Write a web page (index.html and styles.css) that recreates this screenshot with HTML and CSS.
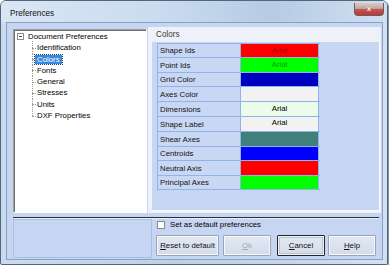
FILE: index.html
```html
<!DOCTYPE html>
<html>
<head>
<meta charset="utf-8">
<link rel="stylesheet" href="styles.css">
</head>
<body>
<div class="window">
  <div class="titlebar">
    <span class="title">Preferences</span>
    <div class="close"><span>x</span></div>
  </div>
  <div class="client">
    <div class="main">
      <div class="tree">
        <div class="root"><span class="minus"></span><span>Document Preferences</span></div>
        <ul class="children">
          <li>Identification</li>
          <li><span class="sel">Colors</span></li>
          <li>Fonts</li>
          <li>General</li>
          <li>Stresses</li>
          <li>Units</li>
          <li>DXF Properties</li>
        </ul>
      </div>
      <div class="page">
        <div class="page-title">Colors</div>
        <div class="panel">
          <div class="table">
            <div class="row h14"><div class="label">Shape Ids</div><div class="swatch red"><span class="t-red">Arial</span></div></div>
            <div class="row h15"><div class="label">Point Ids</div><div class="swatch green"><span class="t-green">Arial</span></div></div>
            <div class="row h14"><div class="label">Grid Color</div><div class="swatch navy"></div></div>
            <div class="row h15"><div class="label">Axes Color</div><div class="swatch light"></div></div>
            <div class="row h15"><div class="label">Dimensions</div><div class="swatch mint"><span>Arial</span></div></div>
            <div class="row h15"><div class="label">Shape Label</div><div class="swatch light top"><span>Arial</span></div></div>
            <div class="row h15"><div class="label">Shear Axes</div><div class="swatch teal"></div></div>
            <div class="row h14"><div class="label">Centroids</div><div class="swatch blue"></div></div>
            <div class="row h15"><div class="label">Neutral Axis</div><div class="swatch red"></div></div>
            <div class="row h14"><div class="label">Principal Axes</div><div class="swatch green"></div></div>
          </div>
        </div>
      </div>
    </div>
    <div class="separator"></div>
    <div class="bottom">
      <div class="left-box"></div>
      <div class="actions">
        <label class="check"><span class="box"></span><span>Set as default preferences</span></label>
        <div class="buttons">
          <button class="btn reset"><u>R</u>eset to default</button>
          <button class="btn disabled"><u>O</u>k</button>
          <button class="btn default"><u>C</u>ancel</button>
          <button class="btn help"><u>H</u>elp</button>
        </div>
      </div>
    </div>
  </div>
</div>
</body>
</html>
```

FILE: styles.css
```css
html, body {
  margin: 0;
  padding: 0;
  background: #ffffff;
}

body {
  font-family: "Liberation Sans", Arial, sans-serif;
  font-size: 7.8px;
  color: #000;
}

.window {
  box-sizing: border-box;
  width: 388px;
  height: 265px;
  border: 1px solid #56657a;
  border-radius: 6px 6px 2px 2px;
  background: linear-gradient(to right, #c9dbee 0%, #bcd1e9 45%, #c3d6ec 75%, #d2e1f1 100%);
  display: flex;
  flex-direction: column;
  box-shadow: 1px 1px 0 #7c8fa8;
}

.titlebar {
  height: 21px;
  display: flex;
  align-items: center;
  padding-left: 9px;
  background: linear-gradient(to right, #d9e6f4 0%, #cadcf0 40%, #b6cce4 70%, #cfdff0 100%);
  border-radius: 5px 5px 0 0;
}

.title {
  font-size: 8.2px;
  color: #111;
  margin-top: 4px;
}

.close {
  margin-left: auto;
  margin-right: 3px;
  align-self: flex-start;
  margin-top: 2px;
  width: 30px;
  height: 13px;
  box-sizing: border-box;
  border: 1px solid #6e5a58;
  border-top: none;
  border-radius: 0 0 4px 4px;
  background: linear-gradient(to bottom, #d9ccc6 0%, #bfa9a2 45%, #c8504e 55%, #b93a3a 100%);
  display: flex;
  align-items: center;
  justify-content: center;
}

.close span {
  color: #fff;
  font-weight: bold;
  font-size: 8px;
  line-height: 1;
  margin-top: -1px;
  text-shadow: 0 0 1px #6a3030;
}

.client {
  flex: 1;
  margin: 0 4px 4px 5px;
  border: 1px solid #8aa1c3;
  background: #c6d6f2;
  display: flex;
  flex-direction: column;
  padding: 0 1px 1px 0;
}

.main {
  display: flex;
  padding: 4px 0 0 6px;
}

.tree {
  box-sizing: border-box;
  margin-top: 2px;
  width: 134px;
  height: 184px;
  background: #fff;
  border: 1px solid;
  border-color: #a0a0a0 #ffffff #ffffff #a0a0a0;
  box-shadow: inset 1px 1px 0 #6e6e6e;
  padding-top: 1px;
  line-height: 11.3px;
}

.root {
  display: flex;
  align-items: center;
  height: 11.3px;
}

.minus {
  box-sizing: border-box;
  width: 7px;
  height: 7px;
  margin-left: 3px;
  margin-right: 4px;
  border: 1px solid #8f8f8f;
  background: linear-gradient(#555, #555) center / 3px 1px no-repeat, #fff;
}

.children {
  list-style: none;
  margin: 0 0 0 18px;
  padding: 0;
}

.children li {
  position: relative;
  padding-left: 5px;
  height: 11.3px;
}

.children li::before {
  content: "";
  position: absolute;
  left: 0;
  top: 5.5px;
  width: 4px;
  border-top: 1px dotted #9a9a9a;
}

.children li::after {
  content: "";
  position: absolute;
  left: 0;
  top: -1px;
  bottom: 0;
  border-left: 1px dotted #9a9a9a;
}

.children li:last-child::after {
  bottom: auto;
  height: 7px;
}

.sel {
  background: #3a88e0;
  color: #fff;
  outline: 1px dotted #1c3e7a;
  padding: 0 2px;
  margin-left: -2px;
}

.page {
  box-sizing: border-box;
  width: 233px;
  height: 186px;
  margin-left: 1px;
  background: #eff1f9;
  display: flex;
  flex-direction: column;
}

.page-title {
  height: 15px;
  padding-left: 8px;
  line-height: 16px;
  font-size: 8.2px;
  color: #3a3a3a;
}

.panel {
  box-sizing: border-box;
  margin-left: 4px;
  width: 228px;
  height: 169px;
  background: #c6d6f3;
  border-right: 1px solid #f8f9fc;
  border-bottom: 1px solid #f8f9fc;
  padding: 1px 0 0 5px;
}

.table {
  width: 162px;
  border-top: 1px solid #91b3e8;
  border-left: 1px solid #91b3e8;
}

.row {
  display: flex;
  box-sizing: border-box;
  border-bottom: 1px solid #91b3e8;
}

.h14 { height: 14px; }
.h15 { height: 15px; }

.label {
  width: 83px;
  box-sizing: border-box;
  padding-left: 2px;
  display: flex;
  align-items: center;
  border-right: 1px solid #91b3e8;
  background: #c8d8f4;
  color: #111;
}

.swatch {
  width: 78px;
  box-sizing: border-box;
  border-right: 1px solid #91b3e8;
  text-align: center;
  padding-top: 2px;
  line-height: 9px;
}

.swatch.top { padding-top: 1px; }

.red { background: #ff0000; }
.green { background: #00ff00; }
.navy { background: #0000c0; }
.light { background: #f2f2f2; }
.mint { background: #ecfcea; }
.teal { background: #3f7f7c; }
.blue { background: #0000ff; }

.t-red { color: #b00000; }
.t-green { color: #00a000; }

.separator {
  margin: 4px 2px 0 6px;
  height: 1px;
  background: #2f2f2f;
  box-shadow: 0 1px 0 #e8eef8;
}

.bottom {
  display: flex;
  margin-top: 1px;
  padding-left: 6px;
  height: 39px;
}

.left-box {
  box-sizing: border-box;
  width: 139px;
  height: 39px;
  background: #c6d6f2;
  border: 1px solid #a8c0e8;
}

.actions {
  display: flex;
  flex-direction: column;
  padding-left: 4px;
}

.check {
  display: flex;
  align-items: center;
  height: 9px;
  margin-top: 1px;
  margin-left: 1px;
}

.box {
  box-sizing: border-box;
  width: 8px;
  height: 8px;
  border: 1px solid #8a8a8a;
  background: #fff;
  margin-right: 5px;
}

.buttons {
  display: flex;
  margin-top: 6px;
}

.btn {
  box-sizing: border-box;
  height: 21px;
  width: 48px;
  padding: 0;
  font-family: "Liberation Sans", Arial, sans-serif;
  font-size: 7.8px;
  color: #111;
  background: linear-gradient(#e3e9f3, #d3dcea);
  border: 1px solid #9aa5b6;
  box-shadow: inset 0 0 0 1px #f6f8fb;
  border-radius: 1px;
}

.btn u { text-decoration: underline; }

.reset { width: 63px; margin-right: 4px; }
.disabled { color: #a3abb8; margin-right: 6px; }
.default {
  border: 1px solid #262626;
  box-shadow: inset 0 0 0 1px #eef1f6, inset 0 0 0 2px #b9c4d6;
  margin-right: 3px;
}
```
